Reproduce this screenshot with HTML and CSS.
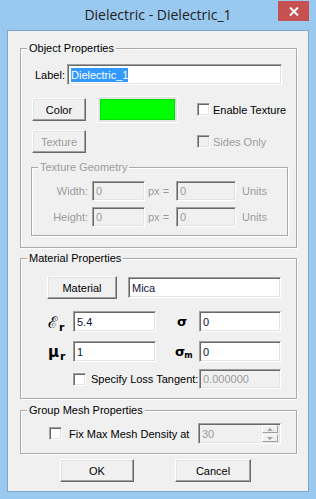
FILE: index.html
```html
<!DOCTYPE html>
<html lang="en">
<head>
  <meta charset="UTF-8">
  <title>Dielectric - Dielectric_1</title>
  <link rel="stylesheet" href="styles.css">
</head>
<body>
  <div class="window">
    <div class="titlebar">
      <span></span>
      <div class="title">Dielectric - Dielectric_1</div>
      <button class="close" title="Close">
        <svg width="10" height="9" viewBox="0 0 10 9"><path d="M1 0.5 L9 8.5 M9 0.5 L1 8.5" stroke="#fff" stroke-width="2"/></svg>
      </button>
    </div>

    <div class="client">
      <!-- Object Properties -->
      <div class="group group-object">
        <span class="legend">Object Properties</span>
        <div class="row row-label">
          <span class="lbl">Label:</span>
          <div class="field field-label"><span class="sel">Dielectric_1</span></div>
        </div>
        <div class="row row-color">
          <button class="btn btn-small">Color</button>
          <div class="swatch"><div class="swatch-fill"></div></div>
          <label class="check check-texture"><span class="box"></span>Enable Texture</label>
        </div>
        <div class="row row-texture">
          <button class="btn btn-small disabled">Texture</button>
          <label class="check check-sides disabled"><span class="box"></span>Sides Only</label>
        </div>
        <div class="group geom disabled">
          <span class="legend">Texture Geometry</span>
          <div class="row geom-row">
            <span class="geom-lbl">Width:</span>
            <div class="field field-px">0</div>
            <span class="eq">px =</span>
            <div class="field field-units">0</div>
            <span class="units">Units</span>
          </div>
          <div class="row geom-row second">
            <span class="geom-lbl">Height:</span>
            <div class="field field-px">0</div>
            <span class="eq">px =</span>
            <div class="field field-units">0</div>
            <span class="units">Units</span>
          </div>
        </div>
      </div>

      <!-- Material Properties -->
      <div class="group group-material">
        <span class="legend">Material Properties</span>
        <div class="row row-material">
          <button class="btn btn-material">Material</button>
          <div class="field field-mat">Mica</div>
        </div>
        <div class="row row-param">
          <span class="sym sym-left"><span class="eps">&#x2130;</span><span class="sub">r</span></span>
          <div class="field field-a">5.4</div>
          <span class="sym sym-right">&sigma;</span>
          <div class="field field-b">0</div>
        </div>
        <div class="row row-param second">
          <span class="sym sym-left"><span class="mu">&mu;</span><span class="sub">r</span></span>
          <div class="field field-a">1</div>
          <span class="sym sym-right sigm">&sigma;<span class="subm">m</span></span>
          <div class="field field-b">0</div>
        </div>
        <div class="row row-loss">
          <label class="check"><span class="box"></span><span class="loss-text">Specify Loss Tangent:</span></label>
          <div class="field field-b disabled">0.000000</div>
        </div>
      </div>

      <!-- Group Mesh Properties -->
      <div class="group group-mesh">
        <span class="legend">Group Mesh Properties</span>
        <div class="row row-mesh">
          <label class="check"><span class="box"></span><span class="mesh-text">Fix Max Mesh Density at</span></label>
          <div class="field field-spin disabled">
            <span class="spin-val">30</span>
            <span class="spin">
              <span class="spin-btn"><span class="arrow up"></span></span>
              <span class="spin-btn"><span class="arrow down"></span></span>
            </span>
          </div>
        </div>
      </div>

      <div class="actions">
        <button class="btn btn-ok">OK</button>
        <button class="btn btn-cancel">Cancel</button>
      </div>
    </div>
  </div>
</body>
</html>
```

FILE: styles.css
```css
* {
  margin: 0;
  padding: 0;
  box-sizing: border-box;
}

body {
  width: 316px;
  height: 499px;
  overflow: hidden;
  font-family: 'Liberation Sans', Arial, sans-serif;
  font-size: 11px;
  color: #000;
}

.window {
  width: 316px;
  height: 499px;
  background: #9ac9ef;
}

.titlebar {
  height: 30px;
  padding: 0 7px;
  display: grid;
  grid-template-columns: 1fr auto 1fr;
}

.title {
  font-family: 'Open Sans', 'Noto Sans', sans-serif;
  font-size: 14px;
  color: #222;
  line-height: 30px;
}

.close {
  justify-self: end;
  margin-top: 1px;
  width: 31px;
  height: 20px;
  border: none;
  background: #c75050;
  display: flex;
  align-items: center;
  justify-content: center;
}

.client {
  margin: 0 7px;
  height: 462px;
  border: 1px solid #7fa6cc;
  background: #f0f0f0;
  padding: 0 11px 0 12px;
}

/* group boxes */
.group {
  position: relative;
  border: 1px solid #a9a9a9;
  box-shadow: inset 1px 1px 0 #fff, 1px 1px 0 #fff;
}

.legend {
  position: absolute;
  top: -7px;
  left: 6px;
  padding: 0 2px;
  background: #f0f0f0;
  line-height: 13px;
}

.row {
  display: flex;
  align-items: center;
}

.group-object {
  margin-top: 17px;
  padding: 15px 0 11px;
}

.row-label {
  margin-left: 14px;
  height: 21px;
}

.lbl {
  width: 32px;
}

/* sunken fields */
.field {
  height: 21px;
  background: #fff;
  border: 1px solid;
  border-color: #a0a0a0 #fff #fff #a0a0a0;
  box-shadow: inset 1px 1px 0 #696969, inset -1px -1px 0 #e3e3e3;
  padding: 0 3px;
  display: flex;
  align-items: center;
  color: #10103a;
}

.field.disabled,
.disabled .field {
  background: #f0f0f0;
  color: #9c9c9c;
}

.field-label {
  width: 215px;
  padding-left: 3px;
}

.sel {
  background: #3399ff;
  color: #fff;
  line-height: 14px;
}

/* raised buttons */
.btn {
  font-family: inherit;
  font-size: 11px;
  color: #000;
  height: 23px;
  background: #f0f0f0;
  border: 1px solid;
  border-color: #fff #696969 #696969 #fff;
  box-shadow: inset -1px -1px 0 #a0a0a0, inset 1px 1px 0 #e3e3e3;
}

.btn.disabled {
  color: #9c9c9c;
}

.btn-small {
  width: 54px;
}

.row-color {
  margin-top: 11px;
  margin-left: 11px;
  height: 27px;
}

.swatch {
  margin-left: 11px;
  width: 81px;
  height: 27px;
  border: 1px solid #fff;
  padding: 2px;
  background: #e3e3e3;
}

.swatch-fill {
  width: 100%;
  height: 100%;
  background: #00ff00;
  border: 1px solid #00e000;
}

/* checkboxes */
.check {
  display: flex;
  align-items: center;
}

.box {
  width: 13px;
  height: 13px;
  background: #fff;
  border: 1px solid;
  border-color: #a0a0a0 #fff #fff #a0a0a0;
  box-shadow: inset 1px 1px 0 #696969, inset -1px -1px 0 #e3e3e3;
  margin-right: 3px;
}

.check.disabled {
  color: #9c9c9c;
}

.check.disabled .box {
  background: #f0f0f0;
}

.check-texture {
  margin-left: 19px;
}

.row-texture {
  margin-top: 7px;
  margin-left: 11px;
  height: 23px;
}

.check-sides {
  margin-left: 111px;
}

/* texture geometry */
.geom {
  margin: 14px 0 0 10px;
  width: 257px;
  padding: 13px 0 8px;
  color: #9c9c9c;
}

.geom-row {
  height: 20px;
}

.geom-row.second {
  margin-top: 6px;
}

.geom-lbl {
  width: 60px;
  padding-right: 4px;
  text-align: right;
}

.geom .field {
  height: 20px;
}

.field-px {
  width: 53px;
}

.eq {
  width: 31px;
  padding-left: 3px;
}

.field-units {
  width: 60px;
}

.units {
  margin-left: 6px;
}

/* material properties */
.group-material {
  margin-top: 10px;
  padding: 17px 0 9px;
}

.row-material {
  margin-left: 26px;
  height: 23px;
}

.btn-material {
  width: 70px;
}

.field-mat {
  margin-left: 11px;
  width: 153px;
}

.row-param {
  margin-top: 12px;
  margin-left: 26px;
  height: 21px;
}

.row-param.second {
  margin-top: 9px;
}

.sym {
  display: flex;
  align-items: baseline;
  font-weight: bold;
}

.sym-left {
  width: 26px;
  padding-left: 1px;
}

.eps {
  font-family: 'DejaVu Serif', serif;
  font-size: 16px;
  font-weight: normal;
}

.mu {
  font-family: 'DejaVu Sans', sans-serif;
  font-size: 15px;
}

.sub {
  font-family: 'DejaVu Sans', sans-serif;
  font-size: 11px;
  position: relative;
  top: 3px;
  margin-left: 1px;
}

.field-a {
  width: 83px;
}

.sym-right {
  width: 43px;
  padding-left: 21px;
  font-family: 'DejaVu Sans', sans-serif;
  font-size: 13px;
}

.sigm {
  padding-left: 19px;
}

.subm {
  font-size: 8px;
  position: relative;
  top: 2px;
  margin-left: -1px;
}

.field-b {
  width: 82px;
}

.row-loss {
  margin-top: 7px;
  margin-left: 52px;
  height: 20px;
}

.row-loss .field {
  height: 20px;
}

.loss-text {
  margin-left: 2px;
  width: 108px;
}

/* group mesh */
.group-mesh {
  margin-top: 11px;
  padding: 12px 0 9px;
}

.row-mesh {
  margin-left: 28px;
  height: 21px;
}

.mesh-text {
  margin-left: 4px;
  width: 129px;
}

.field-spin {
  width: 83px;
  padding-right: 2px;
}

.spin-val {
  flex: 1;
}

.spin {
  display: flex;
  flex-direction: column;
  gap: 1px;
}

.spin-btn {
  width: 16px;
  height: 8px;
  background: #f0f0f0;
  border: 1px solid;
  border-color: #fff #a0a0a0 #a0a0a0 #fff;
  display: flex;
  align-items: center;
  justify-content: center;
}

.arrow {
  width: 0;
  height: 0;
  border-left: 3px solid transparent;
  border-right: 3px solid transparent;
}

.arrow.up {
  border-bottom: 3px solid #a0a0a0;
}

.arrow.down {
  border-top: 3px solid #a0a0a0;
}

/* dialog buttons */
.actions {
  margin-top: 5px;
  margin-left: 40px;
  display: flex;
  gap: 41px;
}

.btn-ok {
  width: 74px;
}

.btn-cancel {
  width: 76px;
}
```
